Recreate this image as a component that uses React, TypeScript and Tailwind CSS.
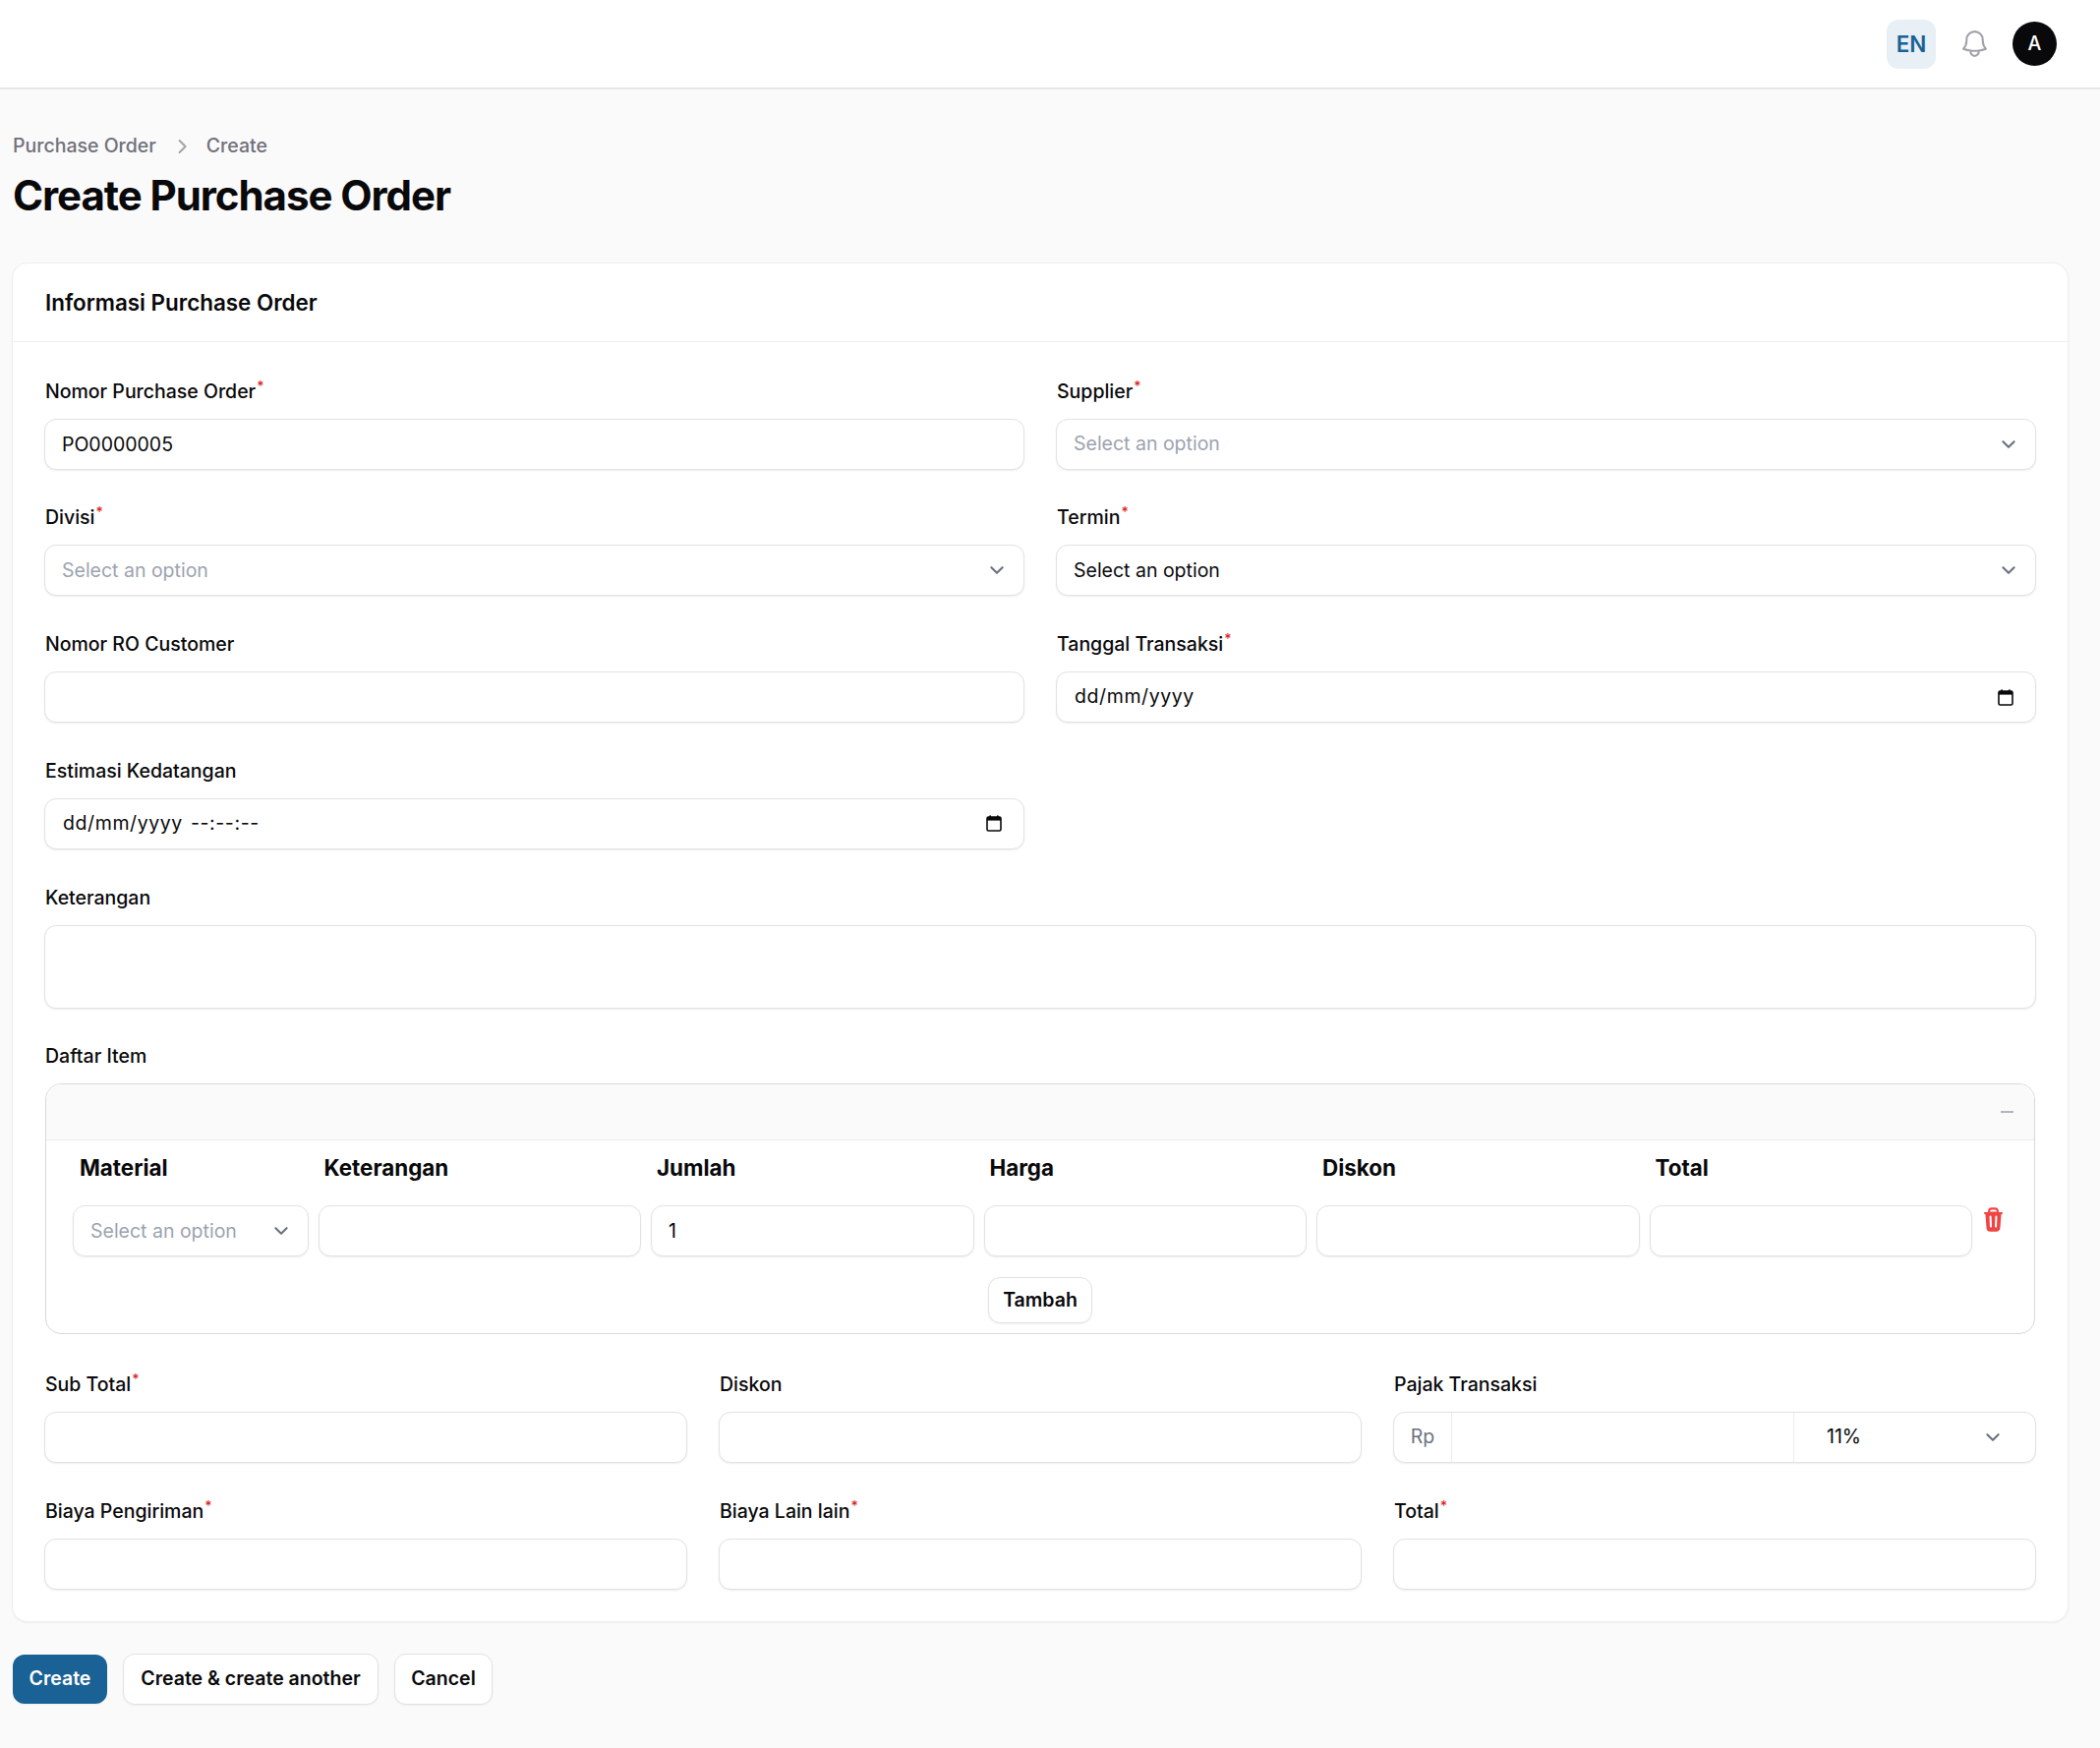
import React from "react";

const box = "h-[52px] w-full rounded-[12px] border border-[#e2e2e5] bg-white shadow-[0_1px_2px_rgba(0,0,0,0.07)] text-[19.5px] text-[#09090b]";

function Chevron({ className = "" }: { className?: string }) {
  return (
    <svg viewBox="0 0 20 20" className={`h-[28px] w-[28px] shrink-0 text-[#6b7280] ${className}`} fill="none" stroke="currentColor" strokeWidth={1.5} strokeLinecap="round" strokeLinejoin="round">
      <path d="m6 8 4 4 4-4" />
    </svg>
  );
}

function Calendar() {
  return (
    <svg viewBox="0 0 16 17" className="h-[17px] w-[16px] shrink-0 text-[#09090b]" fill="none">
      <rect x="1" y="2" width="14" height="14" rx="1.5" stroke="currentColor" strokeWidth="1.6" />
      <rect x="1" y="2" width="14" height="3.6" fill="currentColor" />
      <rect x="3.4" y="0.4" width="1.6" height="2" fill="currentColor" />
      <rect x="11" y="0.4" width="1.6" height="2" fill="currentColor" />
    </svg>
  );
}

function Field({ label, required, children }: { label: string; required?: boolean; children: React.ReactNode }) {
  return (
    <div className="min-w-0">
      <div className="mb-[11px] flex h-[33px] items-center pl-[1px] text-[19.5px] font-medium leading-[27px] text-[#09090b]">
        <span>
          {label}
          {required && <sup className="ml-[1px] text-[14px] font-medium text-[#dc2626]">*</sup>}
        </span>
      </div>
      {children}
    </div>
  );
}

function TextInput({ value = "" }: { value?: string }) {
  return <input readOnly value={value} className={`${box} block px-[17px] outline-none`} />;
}

function Select({ text, placeholder, className = "w-full" }: { text: string; placeholder?: boolean; className?: string }) {
  return (
    <div className={`flex h-[52px] items-center justify-between rounded-[12px] border border-[#e2e2e5] bg-white pl-[17px] pr-[13px] text-[19.5px] shadow-[0_1px_2px_rgba(0,0,0,0.07)] ${placeholder ? "text-[#9ca3af]" : "text-[#09090b]"} ${className}`}>
      <span className="whitespace-nowrap">{text}</span>
      <Chevron />
    </div>
  );
}

function DateInput({ text, time }: { text: string; time?: string }) {
  return (
    <div className={`${box} flex items-center justify-between pl-[18px] pr-[22px]`}>
      <span className="flex gap-[8px] tracking-[0.6px]">
        <span>{text}</span>
        {time && <span>{time}</span>}
      </span>
      <Calendar />
    </div>
  );
}

const columns = ["Keterangan", "Jumlah", "Harga", "Diskon", "Total"];

export default function App() {
  return (
    <div className="flex min-h-[1778px] flex-col bg-[#fafafa] [font-family:Inter,sans-serif]">
      <header className="flex h-[91px] items-center justify-end border-b-2 border-[#e8e8ea] bg-white pr-[44px]">
        <div className="flex h-[50px] w-[50px] items-center justify-center rounded-[12px] bg-[#e8f0f6] text-[22.5px] font-semibold text-[#1a6295]">EN</div>
        <svg viewBox="0 0 24 24" className="ml-[23px] h-[33px] w-[33px] text-[#a1a1aa]" fill="none" stroke="currentColor" strokeWidth={1.5} strokeLinecap="round" strokeLinejoin="round">
          <path d="M14.857 17.082a23.848 23.848 0 0 0 5.454-1.31A8.967 8.967 0 0 1 18 9.75V9A6 6 0 0 0 6 9v.75a8.967 8.967 0 0 1-2.312 6.022c1.733.64 3.56 1.085 5.455 1.31m5.714 0a24.255 24.255 0 0 1-5.714 0m5.714 0a3 3 0 1 1-5.714 0" />
        </svg>
        <div className="ml-[22px] flex h-[45px] w-[45px] items-center justify-center rounded-full bg-[#09090b] pt-[1px] text-[19.5px] font-medium text-white">A</div>
      </header>

      <main className="flex-1 pl-[12px] pr-[32px]">
        <nav className="mt-[44px] flex h-[27px] items-center pl-[1px] text-[19.5px] font-medium text-[#71717a]">
          <span>Purchase Order</span>
          <svg viewBox="0 0 20 20" className="ml-[14px] mr-[13px] h-[24px] w-[24px] text-[#a1a1aa]" fill="none" stroke="currentColor" strokeWidth={1.6} strokeLinecap="round" strokeLinejoin="round">
            <path d="m8 5 5 5-5 5" />
          </svg>
          <span>Create</span>
        </nav>
        <h1 className="mt-[12px] pl-[1px] text-[42px] font-bold leading-[49px] tracking-[-0.025em] text-[#09090b]">Create Purchase Order</h1>

        <section className="mt-[44px] rounded-[16px] border border-[#efefef] bg-white shadow-[0_1px_2px_rgba(0,0,0,0.05)]">
          <div className="flex h-[80px] items-center border-b border-[#efefef] px-[33px] text-[22.4px] font-semibold text-[#09090b]">Informasi Purchase Order</div>

          <div className="px-[32px] pb-[32px] pt-[33.5px]">
            <div className="grid grid-cols-2 gap-x-[32px] gap-y-[32.75px]">
              <Field label="Nomor Purchase Order" required><TextInput value="PO0000005" /></Field>
              <Field label="Supplier" required><Select text="Select an option" placeholder /></Field>
              <Field label="Divisi" required><Select text="Select an option" placeholder /></Field>
              <Field label="Termin" required><Select text="Select an option" /></Field>
              <Field label="Nomor RO Customer"><TextInput /></Field>
              <Field label="Tanggal Transaksi" required><DateInput text="dd/mm/yyyy" /></Field>
              <Field label="Estimasi Kedatangan"><DateInput text="dd/mm/yyyy" time="--:--:--" /></Field>
              <div />
              <div className="col-span-2">
                <Field label="Keterangan">
                  <textarea readOnly className="block h-[85px] w-full resize-none rounded-[12px] border border-[#e2e2e5] bg-white shadow-[0_1px_2px_rgba(0,0,0,0.07)] outline-none" />
                </Field>
              </div>
              <div className="col-span-2">
                <Field label="Daftar Item">
                  <div className="mx-[1px] overflow-hidden rounded-[16px] border border-[#d9d9dc] bg-white">
                    <div className="flex h-[57px] items-center justify-end border-b border-[#ececee] bg-[#fafafa] pr-[21px]">
                      <div className="h-[2px] w-[13px] bg-[#b4b4ba]" />
                    </div>
                    <div className="flex pl-[27px]">
                      <div className="flex gap-[10px]">
                        <div className="w-[239.5px]">
                          <div className="flex h-[66px] items-center pb-[10px] pl-[7px] text-[22.4px] font-bold text-[#09090b]">Material</div>
                          <Select text="Select an option" placeholder />
                        </div>
                        {columns.map((c, i) => (
                          <div key={c} className="w-[328.5px]">
                            <div className="flex h-[66px] items-center pb-[10px] pl-[6px] text-[22.4px] font-bold text-[#09090b]">{c}</div>
                            <TextInput value={i === 1 ? "1" : ""} />
                          </div>
                        ))}
                      </div>
                      <svg viewBox="0 0 20 20" className="ml-[8px] mt-[67px] h-[27px] w-[27px] text-[#ef4444]" fill="currentColor">
                        <path fillRule="evenodd" clipRule="evenodd" d="M8.75 1A2.75 2.75 0 006 3.75v.443c-.795.077-1.584.176-2.365.298a.75.75 0 10.23 1.482l.149-.022.841 10.518A2.75 2.75 0 007.596 19h4.807a2.75 2.75 0 002.742-2.53l.841-10.52.149.023a.75.75 0 00.23-1.482A41.03 41.03 0 0014 4.193V3.75A2.75 2.75 0 0011.25 1h-2.5zM10 4c.84 0 1.673.025 2.5.075V3.75c0-.69-.56-1.25-1.25-1.25h-2.5c-.69 0-1.25.56-1.25 1.25v.325C8.327 4.025 9.16 4 10 4zM8.58 7.72a.75.75 0 00-1.5.06l.3 7.5a.75.75 0 101.5-.06l-.3-7.5zm4.34.06a.75.75 0 10-1.5-.06l-.3 7.5a.75.75 0 101.5.06l.3-7.5z" />
                      </svg>
                    </div>
                    <div className="flex justify-center pb-[10px] pt-[21px]">
                      <button className="flex h-[47px] w-[106px] items-center justify-center rounded-[12px] border border-[#e2e2e5] bg-white text-[19.5px] font-semibold text-[#09090b] shadow-[0_1px_2px_rgba(0,0,0,0.05)]">Tambah</button>
                    </div>
                  </div>
                </Field>
              </div>
            </div>

            <div className="mt-[34.5px] grid grid-cols-3 gap-x-[32px] gap-y-[32.75px]">
              <Field label="Sub Total" required><TextInput /></Field>
              <Field label="Diskon"><TextInput /></Field>
              <Field label="Pajak Transaksi">
                <div className="flex h-[52px] overflow-hidden rounded-[12px] border border-[#e2e2e5] bg-white text-[19.5px] shadow-[0_1px_2px_rgba(0,0,0,0.07)]">
                  <div className="flex w-[59px] items-center justify-center border-r border-[#ececee] text-[#6b7280]">Rp</div>
                  <div className="w-[348px] border-r border-[#ececee]" />
                  <div className="flex flex-1 items-center justify-between pl-[33px] pr-[29px] text-[#09090b]">
                    <span>11%</span>
                    <Chevron />
                  </div>
                </div>
              </Field>
              <Field label="Biaya Pengiriman" required><TextInput /></Field>
              <Field label="Biaya Lain lain" required><TextInput /></Field>
              <Field label="Total" required><TextInput /></Field>
            </div>
          </div>
        </section>

        <div className="mt-[33.5px] flex gap-[16px] pl-[1px]">
          <button className="flex h-[50px] w-[96px] items-center justify-center rounded-[12px] bg-[#1a6295] text-[19.5px] font-semibold text-white shadow-[0_1px_2px_rgba(0,0,0,0.05)]">Create</button>
          <button className="-mt-[1px] flex h-[52px] w-[260px] items-center justify-center rounded-[12px] border border-[#e2e2e5] bg-white text-[19.5px] font-semibold text-[#09090b] shadow-[0_1px_2px_rgba(0,0,0,0.05)]">Create &amp; create another</button>
          <button className="-mt-[1px] flex h-[52px] w-[100px] items-center justify-center rounded-[12px] border border-[#e2e2e5] bg-white text-[19.5px] font-semibold text-[#09090b] shadow-[0_1px_2px_rgba(0,0,0,0.05)]">Cancel</button>
        </div>
      </main>
    </div>
  );
}
